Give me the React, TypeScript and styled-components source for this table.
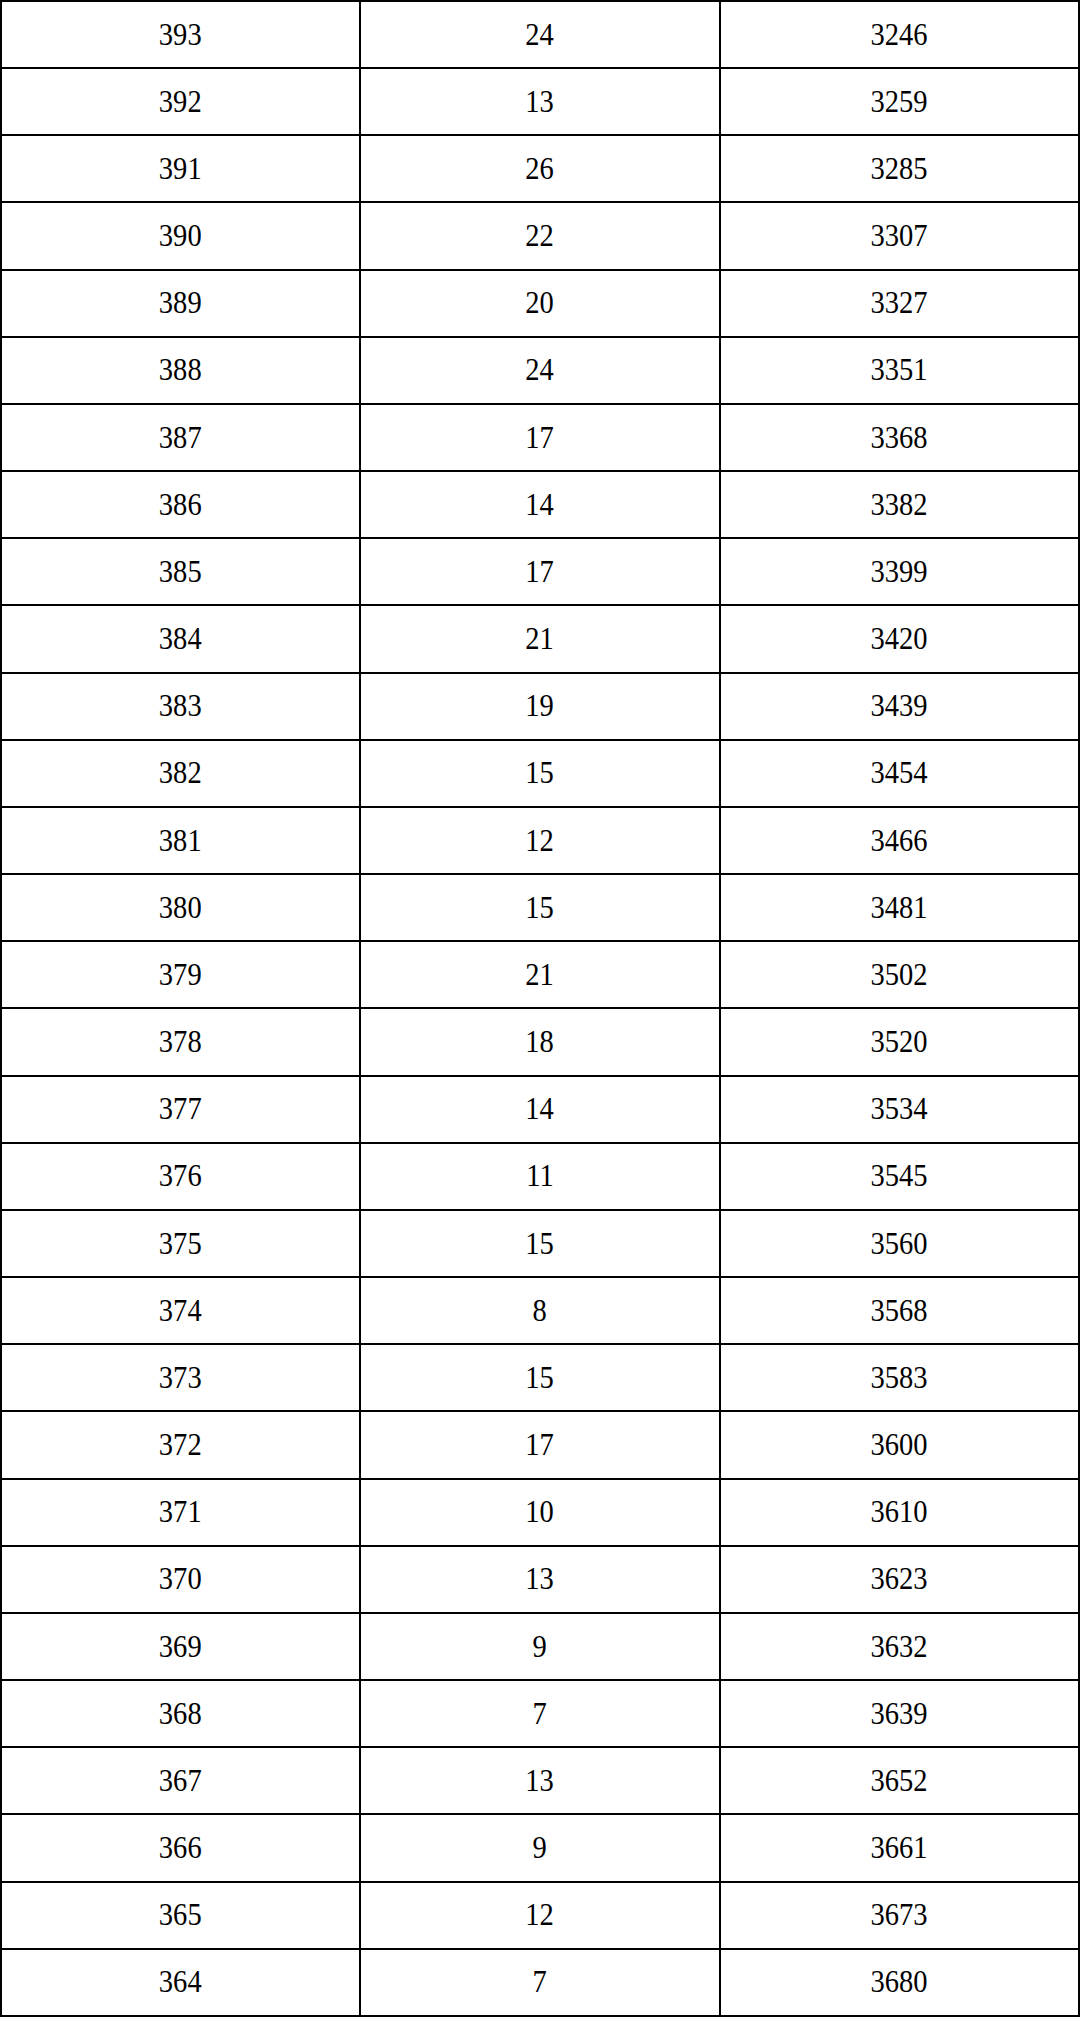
import React from "react";
import styled, { createGlobalStyle } from "styled-components";

const Global = createGlobalStyle`
  html, body { margin: 0; padding: 0; background: #fff; }
  body { width: 1080px; }
`;

const Grid = styled.div`
  box-sizing: border-box;
  width: 1080px;
  height: 2017px;
  display: grid;
  grid-template-columns: repeat(3, 1fr);
  grid-auto-rows: 1fr;
  border-top: 2px solid #000;
  border-left: 2px solid #000;
  background: #fff;
`;

const Cell = styled.div`
  box-sizing: border-box;
  display: flex;
  align-items: center;
  justify-content: center;
  border-right: 2px solid #000;
  border-bottom: 2px solid #000;
  font-family: "Liberation Serif", "Times New Roman", serif;
  font-size: 31px;
  color: #000;
`;

const Num = styled.span`
  display: inline-block;
  transform: scaleX(0.92);
`;

const data: [number, number, number][] = [
  [393, 24, 3246],
  [392, 13, 3259],
  [391, 26, 3285],
  [390, 22, 3307],
  [389, 20, 3327],
  [388, 24, 3351],
  [387, 17, 3368],
  [386, 14, 3382],
  [385, 17, 3399],
  [384, 21, 3420],
  [383, 19, 3439],
  [382, 15, 3454],
  [381, 12, 3466],
  [380, 15, 3481],
  [379, 21, 3502],
  [378, 18, 3520],
  [377, 14, 3534],
  [376, 11, 3545],
  [375, 15, 3560],
  [374, 8, 3568],
  [373, 15, 3583],
  [372, 17, 3600],
  [371, 10, 3610],
  [370, 13, 3623],
  [369, 9, 3632],
  [368, 7, 3639],
  [367, 13, 3652],
  [366, 9, 3661],
  [365, 12, 3673],
  [364, 7, 3680],
];

export default function App() {
  return (
    <>
      <Global />
      <Grid>
        {data.map((row) =>
          row.map((v, i) => (
            <Cell key={`${row[0]}-${i}`}>
              <Num>{v}</Num>
            </Cell>
          ))
        )}
      </Grid>
    </>
  );
}
